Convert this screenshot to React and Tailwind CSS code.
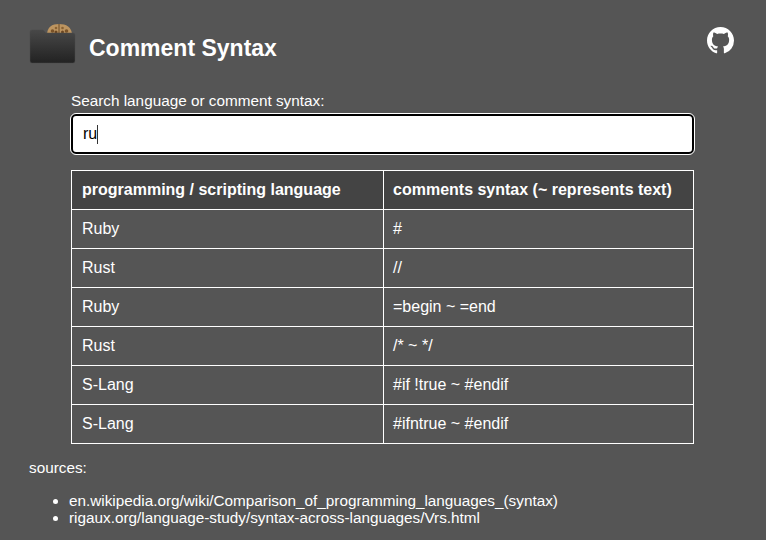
const rows = [
  ['Ruby', '#'],
  ['Rust', '//'],
  ['Ruby', '=begin ~ =end'],
  ['Rust', '/* ~ */'],
  ['S-Lang', '#if !true ~ #endif'],
  ['S-Lang', '#ifntrue ~ #endif'],
]

function FolderLogo() {
  return (
    <svg width="48" height="48" viewBox="0 0 48 48" className="shrink-0">
      <defs>
        <linearGradient id="folder" x1="0" y1="0" x2="0" y2="1">
          <stop offset="0" stopColor="#484848" />
          <stop offset="1" stopColor="#222222" />
        </linearGradient>
      </defs>
      <path d="M18 11 C18 3 23 0 30 0 C37 0 43 3 43 11 Z" fill="#bd9560" />
      <path d="M30 0 V11" stroke="#6b4a26" strokeWidth="1" />
      <circle cx="23.5" cy="7" r="1.8" fill="#7a5228" />
      <circle cx="27" cy="4" r="1.3" fill="#8a6232" />
      <circle cx="27" cy="8" r="1.5" fill="#6b4520" />
      <circle cx="33.5" cy="4" r="1.3" fill="#8a6232" />
      <circle cx="33.5" cy="8" r="1.5" fill="#6b4520" />
      <circle cx="37.5" cy="7" r="1.8" fill="#7a5228" />
      <path d="M3 6 H14 L17 9 H44 Q46 9 46 11 V37 Q46 39 44 39 H3 Q1 39 1 37 V8 Q1 6 3 6 Z" fill="url(#folder)" stroke="#4a4a4a" strokeWidth="0.5" />
    </svg>
  )
}

function GithubMark() {
  return (
    <svg width="27" height="27" viewBox="0 0 16 16" fill="#fff">
      <path d="M8 0C3.58 0 0 3.58 0 8c0 3.54 2.29 6.53 5.47 7.59.4.07.55-.17.55-.38 0-.19-.01-.82-.01-1.49-2.01.37-2.53-.49-2.69-.94-.09-.23-.48-.94-.82-1.13-.28-.15-.68-.52-.01-.53.63-.01 1.08.58 1.23.82.72 1.21 1.87.87 2.33.66.07-.52.28-.87.51-1.07-1.78-.2-3.64-.89-3.64-3.95 0-.87.31-1.59.82-2.15-.08-.2-.36-1.02.08-2.12 0 0 .67-.21 2.2.82.64-.18 1.32-.27 2-.27s1.36.09 2 .27c1.53-1.04 2.2-.82 2.2-.82.44 1.1.16 1.92.08 2.12.51.56.82 1.27.82 2.15 0 3.07-1.87 3.75-3.65 3.95.29.25.54.73.54 1.48 0 1.07-.01 1.93-.01 2.2 0 .21.15.46.55.38A8.013 8.013 0 0016 8c0-4.42-3.58-8-8-8z" />
    </svg>
  )
}

export default function App() {
  return (
    <div className="min-h-screen bg-[#555555] text-white font-['Liberation_Sans',Arial,sans-serif] text-base leading-[18px] px-[29px] pt-[24px] overflow-hidden">
      <header className="flex items-center justify-between h-[48px]">
        <div className="flex items-center gap-[12px]">
          <FolderLogo />
          <h1 className="text-[23px] font-bold">Comment Syntax</h1>
        </div>
        <a className="self-start mt-[3px] mr-[3px]"><GithubMark /></a>
      </header>

      <main className="ml-[42px] mr-[43px] mt-[21px]">
        <label className="block text-[15.3px] leading-4">Search language or comment syntax:</label>
        <div className="mt-[5px] h-[40px] rounded-[5px] bg-white border-[2px] border-black outline outline-1 outline-white px-[10px] flex items-center text-black text-base">
          <span>ru</span>
          <span className="w-px h-[19px] bg-[#333333]"></span>
        </div>

        <table className="mt-[16px] w-full border-collapse border border-white table-fixed">
          <thead>
            <tr className="h-[39px] bg-[#444444]">
              <th className="w-[312px] border border-white px-[10px] text-left font-bold">programming / scripting language</th>
              <th className="border border-white pl-[9px] pr-[10px] text-left font-bold">comments syntax (~ represents text)</th>
            </tr>
          </thead>
          <tbody>
            {rows.map((row, i) => (
              <tr key={i} className="h-[39px]">
                <td className="border border-white px-[10px]">{row[0]}</td>
                <td className="border border-white pl-[9px] pr-[10px]">{row[1]}</td>
              </tr>
            ))}
          </tbody>
        </table>
      </main>

      <section className="mt-[16px] text-[15.3px] leading-4">
        <p>sources:</p>
        <ul className="list-disc pl-[40px] mt-[16px] leading-[17px]">
          <li>en.wikipedia.org/wiki/Comparison_of_programming_languages_(syntax)</li>
          <li>rigaux.org/language-study/syntax-across-languages/Vrs.html</li>
        </ul>
      </section>
    </div>
  )
}
